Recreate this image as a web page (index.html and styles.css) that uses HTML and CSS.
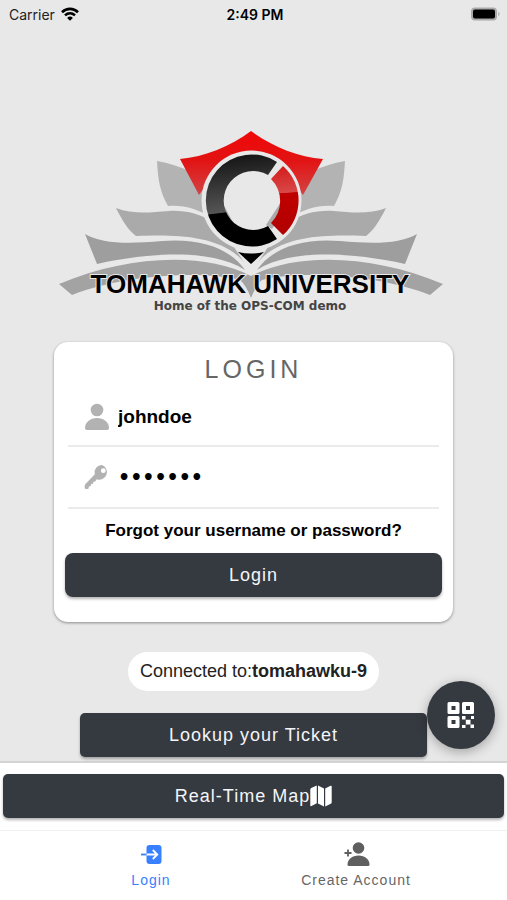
FILE: index.html
```
<!DOCTYPE html>
<html lang="en">
<head>
  <meta charset="utf-8">
  <meta name="viewport" content="width=device-width, initial-scale=1">
  <title>Tomahawk University - Login</title>
  <link rel="stylesheet" href="styles.css">
</head>
<body>
  <header class="status-bar">
    <div class="carrier">
      <span>Carrier</span>
      <svg width="18" height="14" viewBox="0 0 18 14" fill="none" stroke="#000" stroke-width="2.6">
        <path d="M1 5.2C5.6.8 12.4.8 17 5.2"/>
        <path d="M4 8.4c2.900-2.700 7.100-2.700 10 0"/>
        <path d="M9 13.800L6.100 10.900a4.200 4.200 0 0 1 5.800 0z" fill="#000" stroke="none"/>
      </svg>
    </div>
    <div class="clock">2:49 PM</div>
    <div class="battery">
      <svg width="31" height="14" viewBox="0 0 31 14">
        <rect x="1" y=".5" width="26" height="13" rx="4" fill="#a9a9a9"/>
        <rect x="3" y="2.500" width="22" height="9" rx="2" fill="#000"/>
        <path d="M28.300 4.500q2.500 2.500 0 5z" fill="#a9a9a9"/>
      </svg>
    </div>
  </header>

  <main class="content">
    <svg class="logo" viewBox="58 128 392 184" role="img" aria-label="Tomahawk University">
      <defs>
        <linearGradient id="shield" x1="0" y1="0" x2="0" y2="1">
          <stop offset="0" stop-color="#f00808"/>
          <stop offset=".45" stop-color="#e31212"/>
          <stop offset="1" stop-color="#d24444"/>
        </linearGradient>
        <linearGradient id="dark" gradientUnits="userSpaceOnUse" x1="245" y1="154" x2="256" y2="247">
          <stop offset="0" stop-color="#151515"/>
          <stop offset=".59" stop-color="#555"/>
          <stop offset=".6" stop-color="#000"/>
        </linearGradient>
        <linearGradient id="red" gradientUnits="userSpaceOnUse" x1="283" y1="166" x2="288" y2="236">
          <stop offset="0" stop-color="#d51c1c"/>
          <stop offset=".38" stop-color="#d84848"/>
          <stop offset=".39" stop-color="#c00000"/>
          <stop offset="1" stop-color="#b00000"/>
        </linearGradient>
        <g id="pages">
          <path fill="#b3b3b3" d="M345 161C344 180 342 192 334 206C305 203 268 224 252 264V235L270 215L310 172Q328 164 345 161z"/>
          <path fill="#aaa" d="M386 208C380 220 374 230 366 236C330 235 278 233 254 267C268 228 300 209 333 211C355 213 370 214 386 208z"/>
          <path fill="#9e9e9e" d="M417 234L405 264C350 252 290 249 257 270C272 248 302 238 340 241C374 244 400 244 417 234z"/>
          <path fill="#a3a3a3" d="M443 284L430 295C380 275 300 270 262 280Q256 285 251 298V276C300 251 376 256 443 284z"/>
        </g>
      </defs>
      <use href="#pages"/>
      <use href="#pages" transform="translate(502 0) scale(-1 1)"/>
      <path fill="url(#shield)" d="M251 131C271 146 298 157 323 159L303 195Q251 120 199 195L180 159C204 157 231 146 251 131z"/>
      <path fill="#e8e8e8" d="M232 244H270L253 270H249z"/>
      <circle cx="251.500" cy="200.500" r="50" fill="#e8e8e8"/>
      <path fill="#000" d="M238 252Q251 255 264 252L251 264z"/>
      <path fill="#aaa" d="M281 202L266 225L272 229L284 210zM222 202L234 224L228 229L214 210z"/>
      <path fill="url(#dark)" d="M277 162A46 46 0 1 0 277 239L268 226A29.500 29.500 0 1 1 268 175z"/>
      <path fill="url(#red)" d="M283 166A46 46 0 0 1 283 235L271 223A31 31 0 0 0 271 179z"/>
      <text class="logo-name" x="250" y="293">TOMAHAWK UNIVERSITY</text>
      <text class="logo-tagline" x="250" y="310">Home of the OPS-COM demo</text>
    </svg>

    <form class="card" onsubmit="return false">
      <h1>LOGIN</h1>
      <div class="field field-user">
        <label for="username">
          <svg width="26" height="28" viewBox="0 0 26 28" fill="#b2b2b2" aria-label="Username">
            <circle cx="13" cy="7" r="6.300"/>
            <path d="M1 25c0-5.500 5-10 12-10s12 4.500 12 10q0 2-2 2H3q-2 0-2-2z"/>
          </svg>
        </label>
        <input type="text" id="username" value="johndoe">
      </div>
      <div class="field">
        <label for="password">
          <svg width="26" height="26" viewBox="0 0 26 26" fill="#b2b2b2" aria-label="Password">
            <path fill-rule="evenodd" d="M18 1a7.300 7.300 0 0 0-7.200 9.200L1.500 20q-.8.900-.8 2v1.500Q.7 25 2.200 25h1.300q1 0 1.200-1l.2-1.600 1.900-.3.300-2 2-.3.300-2 1.800-.2 1.500-2.400A7.300 7.300 0 1 0 18 1zM19.300 4.300a2.400 2.400 0 1 1 0 4.800 2.400 2.400 0 0 1 0-4.800z"/>
          </svg>
        </label>
        <input type="password" id="password" value="example">
      </div>
      <a class="forgot" href="#">Forgot your username or password?</a>
      <button class="btn btn-login" type="submit">Login</button>
    </form>

    <div class="connected">Connected to:<b>tomahawku-9</b></div>

    <button class="btn btn-ticket" type="button">Lookup your Ticket</button>

    <button class="fab" type="button" aria-label="Scan QR code">
      <svg width="28" height="28" viewBox="0 0 28 28" fill="#fff">
        <path fill-rule="evenodd" d="M2 1h9q1.500 0 1.500 1.500v9Q12.500 13 11 13H2Q.5 13 .5 11.500v-9Q.5 1 2 1zm2.500 4v4h4V5zM16.500 1h9Q27 1 27 2.500v9q0 1.500-1.500 1.500h-9q-1.500 0-1.500-1.500v-9Q15 1 16.500 1zM19 5v4h4V5zM2 15h9q1.500 0 1.500 1.500v9Q12.500 27 11 27H2Q.5 27 .5 25.500v-9Q.5 15 2 15zm2.500 4v4h4v-4z"/>
        <path d="M15 15h3.500v3.500H15zM24 15h3v3h-3zM18.800 18.800h4.700v4.700h-4.700zM15 24h3.500v3H15zM23.500 23.500H27V27h-3.500z"/>
      </svg>
    </button>
  </main>

  <div class="map-bar">
    <button class="btn" type="button">Real-Time Map
      <svg width="22" height="22" viewBox="0 0 22 22" fill="#fff">
        <path d="M6.800.5v17.700L1.500 21Q.3 21.500.3 20.300V4.500q0-1 .9-1.500zM8 .5l6 3v18l-6-3zM15.200 3.600L20.500.8q1.200-.5 1.200.700v15.800q0 1-.9 1.500l-5.600 2.700z"/>
      </svg>
    </button>
  </div>

  <nav class="tabs">
    <a class="tab active" href="#">
      <svg width="28" height="26" viewBox="0 0 28 26">
        <rect x="9.500" y="4" width="15" height="19" rx="3" fill="#3880ff"/>
        <path d="M4 13.500h6" stroke="#3880ff" stroke-width="1.800"/>
        <path d="M9.500 13.500H20M15.800 9l4.500 4.500-4.500 4.500" fill="none" stroke="#fff" stroke-width="1.800"/>
      </svg>
      Login
    </a>
    <a class="tab" href="#">
      <svg width="28" height="26" viewBox="0 0 28 26" fill="#5f5f5f">
        <circle cx="16.500" cy="7" r="5.800"/>
        <path d="M5.500 23.500c0-5 4.500-9 11-9s11 4 11 9q0 1.500-1.500 1.500H7q-1.500 0-1.500-1.500z"/>
        <path d="M2.500 12h7M6 8.500v7" stroke="#5f5f5f" stroke-width="1.800"/>
      </svg>
      Create Account
    </a>
  </nav>
</body>
</html>
```
FILE: styles.css
```
* {
  box-sizing: border-box;
}

body {
  margin: 0;
  min-height: 100vh;
  display: flex;
  flex-direction: column;
  font-family: "Liberation Sans", Arial, sans-serif;
  background-color: #e8e8e8;
  color: #000;
}

/* Status bar */
.status-bar {
  display: grid;
  grid-template-columns: 1fr auto 1fr;
  align-items: center;
  height: 28px;
  padding: 0 6px 0 9px;
  font-family: Inter, sans-serif;
  font-size: 14px;
}

.carrier {
  display: flex;
  align-items: center;
  gap: 6px;
  color: #222;
}

.clock {
  font-weight: 600;
}

.battery {
  display: flex;
  justify-content: flex-end;
}

/* Main content */
.content {
  position: relative;
  flex: 1;
  display: flex;
  flex-direction: column;
  padding: 100px 54px 4px;
}

.logo {
  width: 392px;
  max-width: 100%;
  align-self: center;
}

.logo-name {
  font-size: 26px;
  font-weight: bold;
  text-anchor: middle;
  stroke: #e8e8e8;
  stroke-width: 2px;
  paint-order: stroke;
}

.logo-tagline {
  font-family: "DejaVu Sans", sans-serif;
  font-size: 12px;
  font-weight: bold;
  text-anchor: middle;
  fill: #444;
}

.card {
  display: flex;
  flex-direction: column;
  margin-top: 30px;
  padding: 11px 11px 25px;
  background-color: #fff;
  border-radius: 14px;
  box-shadow: 0 1px 3px rgba(0, 0, 0, 0.4);
}

.card h1 {
  margin: 0;
  font-size: 25px;
  font-weight: normal;
  line-height: 32px;
  letter-spacing: 4px;
  text-align: center;
  color: #666;
}

.field {
  display: flex;
  align-items: center;
  gap: 8px;
  height: 62px;
  margin: 0 3px;
  padding-left: 16px;
  border-bottom: 2px solid #ebebeb;
}

.field-user {
  padding-top: 4px;
}

.field label {
  display: flex;
}

.field input {
  flex: 1;
  min-width: 0;
  padding: 0;
  border: none;
  outline: none;
  background: none;
  font-family: inherit;
  font-size: 19px;
  font-weight: bold;
  color: #000;
}

.field input[type="password"] {
  font-family: "DejaVu Sans", sans-serif;
}

.forgot {
  font-size: 17px;
  font-weight: bold;
  line-height: 44px;
  text-align: center;
  text-decoration: none;
  color: #000;
}

.btn {
  display: flex;
  align-items: center;
  justify-content: center;
  height: 44px;
  padding: 0;
  border: none;
  border-radius: 5px;
  background-color: #353a40;
  box-shadow: 0 2px 3px rgba(0, 0, 0, 0.3);
  color: #f4f5f8;
  font-family: inherit;
  font-size: 18px;
  letter-spacing: 1px;
  cursor: pointer;
}

.btn-login {
  border-radius: 8px;
}

.connected {
  align-self: center;
  margin-top: 30px;
  padding: 0 12px;
  border-radius: 20px;
  background-color: #fff;
  font-size: 18px;
  line-height: 39px;
  color: #222;
}

.btn-ticket {
  margin: 22px 26px 0;
}

.fab {
  position: absolute;
  right: 12px;
  bottom: 12px;
  display: flex;
  align-items: center;
  justify-content: center;
  width: 68px;
  height: 68px;
  padding: 0;
  border: none;
  border-radius: 50%;
  background-color: #353a40;
  box-shadow: 0 3px 12px rgba(0, 0, 0, 0.3);
  cursor: pointer;
}

/* Bottom bars */
.map-bar {
  padding: 11px 3px 12px;
  border-top: 2px solid #d4d4d4;
  background-color: #fff;
}

.map-bar .btn {
  width: 100%;
}

.tabs {
  display: flex;
  justify-content: center;
  height: 70px;
  border-top: 1px solid #f0f0f0;
  background-color: #fff;
}

.tab {
  flex: 1;
  max-width: 205px;
  display: flex;
  flex-direction: column;
  align-items: center;
  gap: 4px;
  padding-top: 10px;
  font-size: 14px;
  line-height: 18px;
  letter-spacing: 1px;
  text-decoration: none;
  color: #666;
}

.tab.active {
  color: #3880ff;
}
```
